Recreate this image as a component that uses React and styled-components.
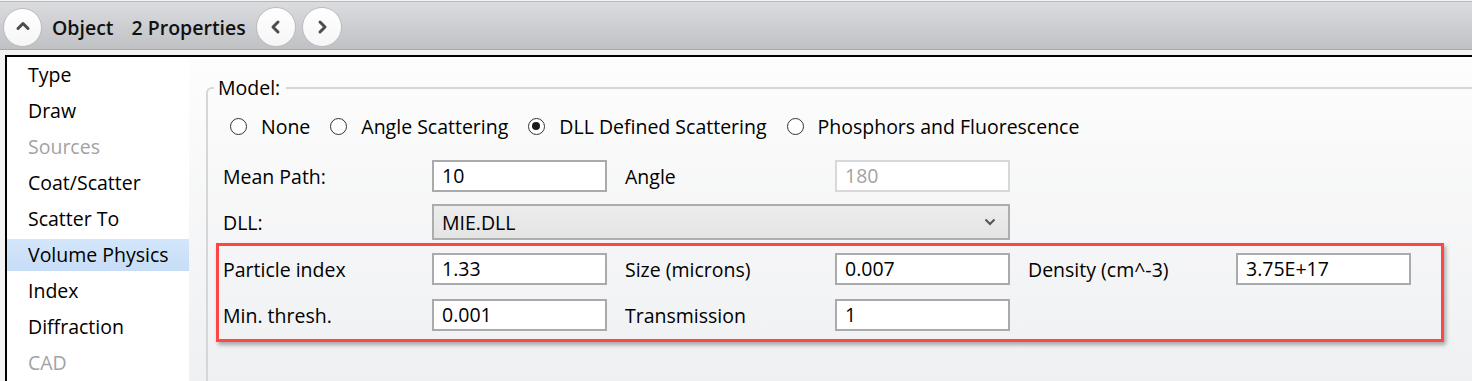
import styled, { createGlobalStyle } from "styled-components";

const GlobalStyle = createGlobalStyle`
  html, body {
    margin: 0;
    padding: 0;
    background: #f3f3f3;
    overflow: hidden;
  }
  body {
    font-family: "Open Sans", "Noto Sans", sans-serif;
    font-size: 19.5px;
    color: #000;
  }
`;

const navItems = [
  { name: "Type" },
  { name: "Draw" },
  { name: "Sources", disabled: true },
  { name: "Coat/Scatter" },
  { name: "Scatter To" },
  { name: "Volume Physics", active: true },
  { name: "Index" },
  { name: "Diffraction" },
  { name: "CAD", disabled: true },
];

const radios = [
  { label: "None" },
  { label: "Angle Scattering" },
  { label: "DLL Defined Scattering", checked: true },
  { label: "Phosphors and Fluorescence" },
];

function Chevron({ dir }) {
  const points = {
    up: "5,11.5 10,6.5 15,11.5",
    left: "12,5 7,10 12,15",
    right: "8,5 13,10 8,15",
  }[dir];
  return (
    <svg width="20" height="20" viewBox="0 0 20 20">
      <polyline
        points={points}
        fill="none"
        stroke="#4d4d4d"
        strokeWidth="3"
        strokeLinecap="round"
        strokeLinejoin="round"
      />
    </svg>
  );
}

export default function App() {
  return (
    <>
      <GlobalStyle />
      <Header>
        <CircleButton $size={39}>
          <Chevron dir="up" />
        </CircleButton>
        <Title>Object</Title>
        <Title className="count">2 Properties</Title>
        <NavButtons>
          <CircleButton $size={40}>
            <Chevron dir="left" />
          </CircleButton>
          <CircleButton $size={40}>
            <Chevron dir="right" />
          </CircleButton>
        </NavButtons>
      </Header>
      <Frame>
        <Nav>
          {navItems.map((item) => (
            <NavItem
              key={item.name}
              $active={item.active}
              $disabled={item.disabled}
            >
              {item.name}
            </NavItem>
          ))}
        </Nav>
        <Content>
          <GroupBox>
            <legend>Model:</legend>
            <RadioRow>
              {radios.map((r) => (
                <RadioOption key={r.label}>
                  <RadioCircle $checked={r.checked} />
                  {r.label}
                </RadioOption>
              ))}
            </RadioRow>
            <FieldGrid>
              <Label>Mean Path:</Label>
              <TextBox>10</TextBox>
              <Label>Angle</Label>
              <TextBox $disabled>180</TextBox>
            </FieldGrid>
            <FieldGrid className="combo-row">
              <Label>DLL:</Label>
              <Combo>
                MIE.DLL
                <svg width="12" height="8" viewBox="0 0 12 8">
                  <polyline
                    points="1.5,1.5 6,6 10.5,1.5"
                    fill="none"
                    stroke="#555"
                    strokeWidth="2"
                  />
                </svg>
              </Combo>
            </FieldGrid>
            <Highlight>
              <Label>Particle index</Label>
              <TextBox>1.33</TextBox>
              <Label>Size (microns)</Label>
              <TextBox>0.007</TextBox>
              <Label>Density (cm^-3)</Label>
              <TextBox>3.75E+17</TextBox>
              <Label>Min. thresh.</Label>
              <TextBox>0.001</TextBox>
              <Label>Transmission</Label>
              <TextBox>1</TextBox>
            </Highlight>
          </GroupBox>
        </Content>
      </Frame>
    </>
  );
}

const Header = styled.div`
  display: flex;
  align-items: center;
  height: 44px;
  margin-top: 1px;
  padding: 3px 0 0 3px;
  border-top: 1px solid #b8b9bd;
  border-bottom: 1px solid #a8a9ad;
  background: linear-gradient(#dadce0, #bfc1c5);
  .count {
    margin-left: 18px;
  }
`;

const Title = styled.span`
  margin-left: 10px;
  font-size: 19.5px;
  font-weight: 600;
  color: #111;
`;

const NavButtons = styled.div`
  display: flex;
  gap: 6px;
  margin-left: 10px;
`;

const CircleButton = styled.div`
  display: flex;
  align-items: center;
  justify-content: center;
  width: ${(p) => p.$size}px;
  height: ${(p) => p.$size}px;
  border-radius: 50%;
  border: 1.5px solid #bcbcbc;
  background: linear-gradient(#ffffff, #f6f6f6);
  box-sizing: border-box;
`;

const Frame = styled.div`
  display: flex;
  margin: 5px 0 0 5px;
  height: 330px;
  border-top: 2px solid #000;
  border-left: 2px solid #000;
  overflow: hidden;
`;

const Nav = styled.div`
  width: 182px;
  flex-shrink: 0;
  padding-top: 2px;
  background: #fff;
  display: flex;
  flex-direction: column;
  gap: 4px;
`;

const NavItem = styled.div`
  height: 32px;
  line-height: 32px;
  padding-left: 21px;
  color: ${(p) => (p.$disabled ? "#a3a3a3" : "#000")};
  background: ${(p) =>
    p.$active ? "linear-gradient(#d3e6fb, #c7ddf6)" : "transparent"};
`;

const Content = styled.div`
  flex: 1;
  padding: 19px 0 0 17px;
  background: linear-gradient(#fdfdfd, #eff0f2);
`;

const GroupBox = styled.fieldset`
  margin: 0 -40px 0 0;
  padding: 0 0 40px 15px;
  border: 2px solid #d6d6d8;
  border-radius: 6px 0 0 0;
  legend {
    padding: 0 6px 0 4px;
    margin-left: -9px;
    line-height: 24px;
  }
`;

const RadioRow = styled.div`
  display: flex;
  align-items: center;
  gap: 20px;
  height: 24px;
  margin: 14px 0 0 7px;
`;

const RadioOption = styled.label`
  display: flex;
  align-items: center;
  gap: 14px;
`;

const RadioCircle = styled.span`
  position: relative;
  width: 17px;
  height: 17px;
  box-sizing: border-box;
  border-radius: 50%;
  border: 1.5px solid #333;
  background: #fff;
  &::after {
    content: "";
    display: ${(p) => (p.$checked ? "block" : "none")};
    position: absolute;
    left: 3px;
    top: 3px;
    width: 8px;
    height: 8px;
    border-radius: 50%;
    background: #1a1a1a;
  }
`;

const FieldGrid = styled.div`
  display: grid;
  grid-template-columns: 191px 175px 192px 175px 190px 175px;
  column-gap: 18px;
  align-items: center;
  margin-top: 22px;
  &.combo-row {
    margin-top: 12px;
  }
`;

const Label = styled.div`
  white-space: nowrap;
`;

const TextBox = styled.div`
  height: 32px;
  box-sizing: border-box;
  padding-left: 8px;
  line-height: 28px;
  border: 2px solid ${(p) => (p.$disabled ? "#d8d8da" : "#aaaaad")};
  background: #fff;
  color: ${(p) => (p.$disabled ? "#a2a2a2" : "#000")};
`;

const Combo = styled.div`
  grid-column: 2 / 5;
  display: flex;
  align-items: center;
  justify-content: space-between;
  height: 36px;
  box-sizing: border-box;
  padding: 0 12px 0 8px;
  border: 2px solid #adadad;
  background: linear-gradient(#ececec, #e4e4e4);
`;

const Highlight = styled(FieldGrid)`
  width: 1228px;
  box-sizing: border-box;
  margin: 3px 0 0 -7px;
  padding: 7px 0 8px 4px;
  row-gap: 14px;
  border: 3px solid #ff4646;
  box-shadow: 2px 3px 4px rgba(0, 0, 0, 0.3);
`;
